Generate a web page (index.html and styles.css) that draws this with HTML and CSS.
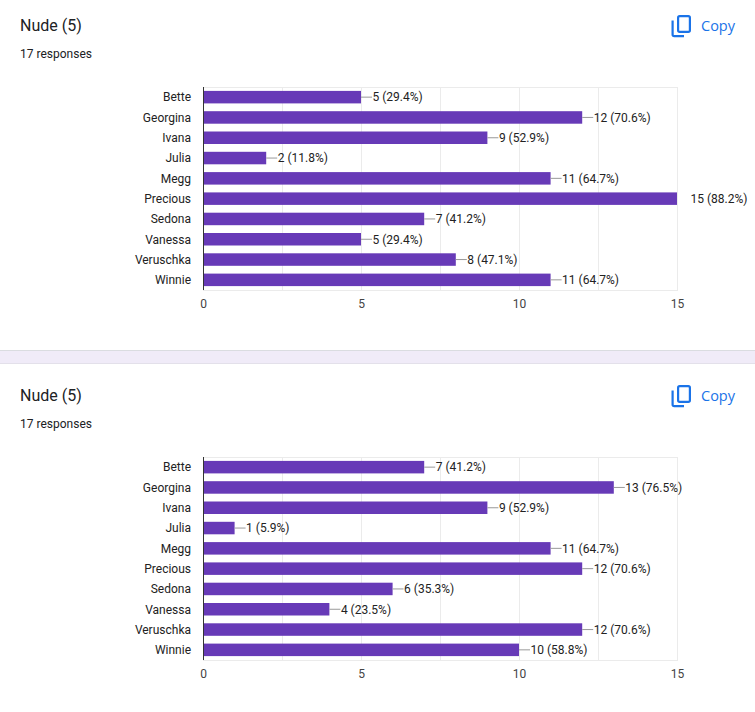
FILE: index.html
```html
<!DOCTYPE html>
<html lang="en">
<head>
<meta charset="utf-8">
<title>Responses</title>
<link rel="stylesheet" href="styles.css">
</head>
<body>
<section class="card first">
  <div class="head">
    <h2 class="title">Nude (5)</h2>
    <button class="copy" type="button">
      <svg class="copy-icon" width="20" height="23" viewBox="0 0 20 23" aria-hidden="true">
        <rect x="7.1" y="1.1" width="11.8" height="15.8" rx="1.6"/>
        <path d="M1.6 5.4V19.6c0 .9.7 1.6 1.6 1.6H13"/>
      </svg>
      <span>Copy</span>
    </button>
  </div>
  <div class="count">17 responses</div>
  <svg class="chart" width="755" height="240" viewBox="0 0 755 240">
    <g class="grid">
      <line x1="282.5" y1="7" x2="282.5" y2="210"/>
      <line x1="361.5" y1="7" x2="361.5" y2="210"/>
      <line x1="440.5" y1="7" x2="440.5" y2="210"/>
      <line x1="519.5" y1="7" x2="519.5" y2="210"/>
      <line x1="598.5" y1="7" x2="598.5" y2="210"/>
      <line x1="677.5" y1="7" x2="677.5" y2="210"/>
      <line x1="203" y1="7.5" x2="678" y2="7.5"/>
      <line x1="203" y1="210.5" x2="678" y2="210.5"/>
    </g>
    <g class="bars">
      <rect x="203" y="10.9" width="158" height="12.5"/>
      <rect x="203" y="31.2" width="379.2" height="12.5"/>
      <rect x="203" y="51.5" width="284.4" height="12.5"/>
      <rect x="203" y="71.8" width="63.2" height="12.5"/>
      <rect x="203" y="92.1" width="347.6" height="12.5"/>
      <rect x="203" y="112.4" width="474" height="12.5"/>
      <rect x="203" y="132.7" width="221.2" height="12.5"/>
      <rect x="203" y="153" width="158" height="12.5"/>
      <rect x="203" y="173.3" width="252.8" height="12.5"/>
      <rect x="203" y="193.6" width="347.6" height="12.5"/>
    </g>
    <g class="leaders">
      <line x1="361" y1="17.15" x2="372" y2="17.15"/>
      <line x1="582.2" y1="37.45" x2="593.2" y2="37.45"/>
      <line x1="487.4" y1="57.75" x2="498.4" y2="57.75"/>
      <line x1="266.2" y1="78.05" x2="277.2" y2="78.05"/>
      <line x1="550.6" y1="98.35" x2="561.6" y2="98.35"/>
      <line x1="424.2" y1="138.95" x2="435.2" y2="138.95"/>
      <line x1="361" y1="159.25" x2="372" y2="159.25"/>
      <line x1="455.8" y1="179.55" x2="466.8" y2="179.55"/>
      <line x1="550.6" y1="199.85" x2="561.6" y2="199.85"/>
    </g>
    <line class="axis" x1="203.5" y1="7" x2="203.5" y2="210"/>
    <g class="cats">
      <text x="191" y="21.45">Bette</text>
      <text x="191" y="41.75">Georgina</text>
      <text x="191" y="62.05">Ivana</text>
      <text x="191" y="82.35">Julia</text>
      <text x="191" y="102.65">Megg</text>
      <text x="191" y="122.95">Precious</text>
      <text x="191" y="143.25">Sedona</text>
      <text x="191" y="163.55">Vanessa</text>
      <text x="191" y="183.85">Veruschka</text>
      <text x="191" y="204.15">Winnie</text>
    </g>
    <g class="vals">
      <text x="372.5" y="21.45">5 (29.4%)</text>
      <text x="593.7" y="41.75">12 (70.6%)</text>
      <text x="498.9" y="62.05">9 (52.9%)</text>
      <text x="277.7" y="82.35">2 (11.8%)</text>
      <text x="562.1" y="102.65">11 (64.7%)</text>
      <text x="690.5" y="122.95">15 (88.2%)</text>
      <text x="435.7" y="143.25">7 (41.2%)</text>
      <text x="372.5" y="163.55">5 (29.4%)</text>
      <text x="467.3" y="183.85">8 (47.1%)</text>
      <text x="562.1" y="204.15">11 (64.7%)</text>
    </g>
    <g class="ticks">
      <text x="203.5" y="228">0</text>
      <text x="361.5" y="228">5</text>
      <text x="519.5" y="228">10</text>
      <text x="677.5" y="228">15</text>
    </g>
  </svg>
</section>
<div class="gap"></div>
<section class="card">
  <div class="head">
    <h2 class="title">Nude (5)</h2>
    <button class="copy" type="button">
      <svg class="copy-icon" width="20" height="23" viewBox="0 0 20 23" aria-hidden="true">
        <rect x="7.1" y="1.1" width="11.8" height="15.8" rx="1.6"/>
        <path d="M1.6 5.4V19.6c0 .9.7 1.6 1.6 1.6H13"/>
      </svg>
      <span>Copy</span>
    </button>
  </div>
  <div class="count">17 responses</div>
  <svg class="chart" width="755" height="240" viewBox="0 0 755 240">
    <g class="grid">
      <line x1="282.5" y1="7" x2="282.5" y2="210"/>
      <line x1="361.5" y1="7" x2="361.5" y2="210"/>
      <line x1="440.5" y1="7" x2="440.5" y2="210"/>
      <line x1="519.5" y1="7" x2="519.5" y2="210"/>
      <line x1="598.5" y1="7" x2="598.5" y2="210"/>
      <line x1="677.5" y1="7" x2="677.5" y2="210"/>
      <line x1="203" y1="7.5" x2="678" y2="7.5"/>
      <line x1="203" y1="210.5" x2="678" y2="210.5"/>
    </g>
    <g class="bars">
      <rect x="203" y="10.9" width="221.2" height="12.5"/>
      <rect x="203" y="31.2" width="410.8" height="12.5"/>
      <rect x="203" y="51.5" width="284.4" height="12.5"/>
      <rect x="203" y="71.8" width="31.6" height="12.5"/>
      <rect x="203" y="92.1" width="347.6" height="12.5"/>
      <rect x="203" y="112.4" width="379.2" height="12.5"/>
      <rect x="203" y="132.7" width="189.6" height="12.5"/>
      <rect x="203" y="153" width="126.4" height="12.5"/>
      <rect x="203" y="173.3" width="379.2" height="12.5"/>
      <rect x="203" y="193.6" width="316" height="12.5"/>
    </g>
    <g class="leaders">
      <line x1="424.2" y1="17.15" x2="435.2" y2="17.15"/>
      <line x1="613.8" y1="37.45" x2="624.8" y2="37.45"/>
      <line x1="487.4" y1="57.75" x2="498.4" y2="57.75"/>
      <line x1="234.6" y1="78.05" x2="245.6" y2="78.05"/>
      <line x1="550.6" y1="98.35" x2="561.6" y2="98.35"/>
      <line x1="582.2" y1="118.65" x2="593.2" y2="118.65"/>
      <line x1="392.6" y1="138.95" x2="403.6" y2="138.95"/>
      <line x1="329.4" y1="159.25" x2="340.4" y2="159.25"/>
      <line x1="582.2" y1="179.55" x2="593.2" y2="179.55"/>
      <line x1="519" y1="199.85" x2="530" y2="199.85"/>
    </g>
    <line class="axis" x1="203.5" y1="7" x2="203.5" y2="210"/>
    <g class="cats">
      <text x="191" y="21.45">Bette</text>
      <text x="191" y="41.75">Georgina</text>
      <text x="191" y="62.05">Ivana</text>
      <text x="191" y="82.35">Julia</text>
      <text x="191" y="102.65">Megg</text>
      <text x="191" y="122.95">Precious</text>
      <text x="191" y="143.25">Sedona</text>
      <text x="191" y="163.55">Vanessa</text>
      <text x="191" y="183.85">Veruschka</text>
      <text x="191" y="204.15">Winnie</text>
    </g>
    <g class="vals">
      <text x="435.7" y="21.45">7 (41.2%)</text>
      <text x="625.3" y="41.75">13 (76.5%)</text>
      <text x="498.9" y="62.05">9 (52.9%)</text>
      <text x="246.1" y="82.35">1 (5.9%)</text>
      <text x="562.1" y="102.65">11 (64.7%)</text>
      <text x="593.7" y="122.95">12 (70.6%)</text>
      <text x="404.1" y="143.25">6 (35.3%)</text>
      <text x="340.9" y="163.55">4 (23.5%)</text>
      <text x="593.7" y="183.85">12 (70.6%)</text>
      <text x="530.5" y="204.15">10 (58.8%)</text>
    </g>
    <g class="ticks">
      <text x="203.5" y="228">0</text>
      <text x="361.5" y="228">5</text>
      <text x="519.5" y="228">10</text>
      <text x="677.5" y="228">15</text>
    </g>
  </svg>
</section>
</body>
</html>
```
FILE: styles.css
```css
* { box-sizing: border-box; }

body {
  margin: 0;
  background: #ffffff;
  font-family: Roboto, "Liberation Sans", Arial, sans-serif;
  color: #202124;
}

.card {
  background: #ffffff;
  padding: 20px 0 30px;
}

.card.first {
  padding-top: 14px;
}

.head {
  display: flex;
  align-items: center;
  justify-content: space-between;
  padding: 0 20px;
}

.title {
  margin: 0;
  font-size: 16px;
  line-height: 24px;
  font-weight: 400;
  color: #202124;
}

.copy {
  display: flex;
  align-items: center;
  gap: 10px;
  padding: 0;
  border: 0;
  background: none;
  color: #1a73e8;
  font-family: "Open Sans", Roboto, sans-serif;
  font-size: 14.5px;
  font-weight: 500;
  line-height: 20px;
  cursor: pointer;
}

.copy-icon {
  display: block;
  fill: none;
  stroke: #1a73e8;
  stroke-width: 2.2;
}

.count {
  margin-top: 8px;
  padding: 0 20px;
  font-size: 12px;
  line-height: 16px;
  color: #202124;
}

.chart {
  display: block;
  margin-top: 18px;
  font-family: Roboto, "Liberation Sans", Arial, sans-serif;
  font-size: 12px;
}

.grid line {
  stroke: #ebebeb;
  stroke-width: 1;
}

.bars rect {
  fill: #673ab7;
}

.leaders line {
  stroke: #999999;
  stroke-width: 1;
}

.axis {
  stroke: #333333;
  stroke-width: 1;
}

.cats text {
  fill: #222222;
  text-anchor: end;
}

.vals text {
  fill: #222222;
}

.ticks text {
  fill: #444444;
  text-anchor: middle;
}

.gap {
  height: 14px;
  background: #f0ebf8;
  border-top: 1px solid #dadce0;
  border-bottom: 1px solid #e3e0ea;
}
```
